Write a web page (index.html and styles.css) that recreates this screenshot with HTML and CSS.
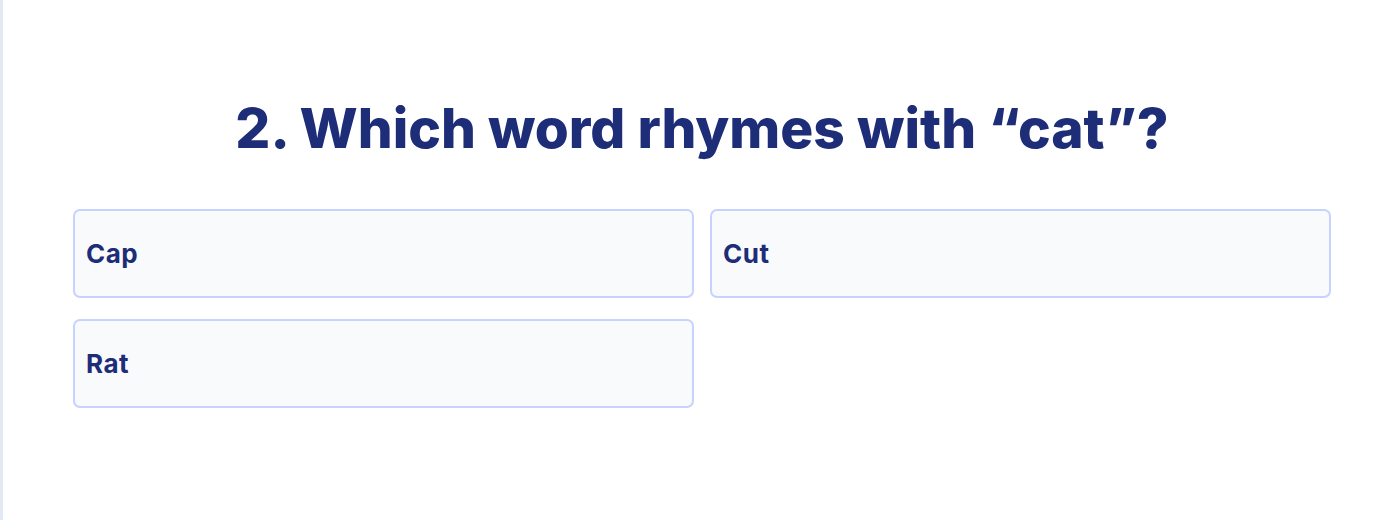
FILE: index.html
```html
<!DOCTYPE html>
<html lang="en">
<head>
<meta charset="utf-8">
<link rel="stylesheet" href="styles.css">
</head>
<body>
<div class="page">
  <main class="quiz">
    <h1 class="question">2. Which word rhymes with “cat”?</h1>
    <div class="options">
      <button class="option">Cap</button>
      <button class="option">Cut</button>
      <button class="option">Rat</button>
    </div>
  </main>
</div>
</body>
</html>
```
FILE: styles.css
```css
html, body {
  margin: 0;
  padding: 0;
  background: #ffffff;
}
.page {
  min-height: 520px;
  border-left: 3px solid #e3e9f4;
  box-sizing: border-box;
}
.quiz {
  width: 1258px;
  padding: 92px 0 0 70px;
  font-family: "Inter", "Open Sans", sans-serif;
}
.question {
  margin: 0 0 45px 0;
  text-align: center;
  color: #1e2d78;
  font-size: 55px;
  font-weight: 800;
  line-height: 72px;
  letter-spacing: 0;
}
.options {
  display: grid;
  grid-template-columns: 1fr 1fr;
  column-gap: 16px;
  row-gap: 21px;
}
.option {
  height: 89px;
  box-sizing: border-box;
  border: 2px solid #c7d2fe;
  border-radius: 7px;
  background: #f8fafc;
  text-align: left;
  padding: 0 11px;
  font-family: "Inter", sans-serif;
  font-size: 26px;
  font-weight: 700;
  letter-spacing: 0.5px;
  color: #1e2d78;
}
```
